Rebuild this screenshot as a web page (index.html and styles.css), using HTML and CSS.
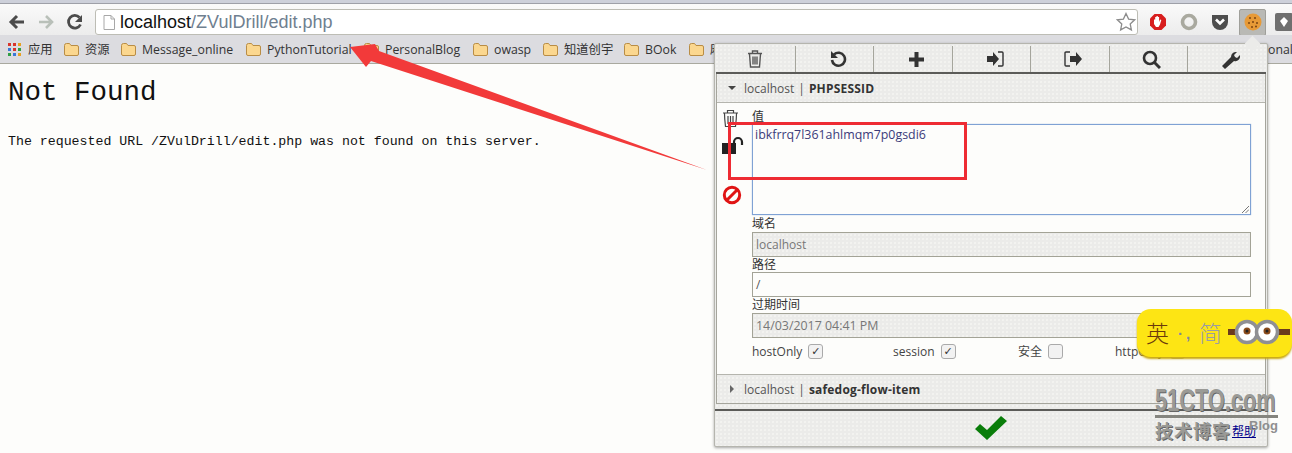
FILE: index.html
```html
<!DOCTYPE html>
<html lang="zh">
<head>
<meta charset="utf-8">
<title>Not Found</title>
<link rel="stylesheet" href="styles.css">
</head>
<body>
<header class="chrome">
  <div class="tabstrip"></div>
  <div class="toolbar">
    <svg class="nav" width="20" height="20" viewBox="0 0 20 20"><path d="M17 10H5M10 4l-6 6 6 6" fill="none" stroke="#4b4b4b" stroke-width="3"/></svg>
    <svg class="nav" width="20" height="20" viewBox="0 0 20 20"><path d="M3 10h12M10 4l6 6-6 6" fill="none" stroke="#b9c0b9" stroke-width="2.6"/></svg>
    <svg class="nav" width="20" height="20" viewBox="0 0 20 20"><path d="M15.500 12.500A6.300 6.300 0 1 1 14.500 5.500" fill="none" stroke="#4b4b4b" stroke-width="2.8"/><path d="M17 3v7h-7z" fill="#4b4b4b"/></svg>
    <div class="omnibox">
      <svg class="page-icon" width="12" height="15" viewBox="0 0 12 15"><path d="M1 .5h7l3.500 3.500v10.500H1z M8 .5V4h3.500" fill="#fff" stroke="#a8a8a8"/></svg>
      <span class="url"><span class="host">localhost</span>/ZVulDrill/edit.php</span>
      <svg class="star" width="20" height="20" viewBox="0 0 20 20"><path d="M10 1.500l2.600 5.600 6 .7-4.400 4.100 1.200 6L10 15l-5.400 2.900 1.200-6L1.400 7.800l6-.7z" fill="#fff" stroke="#8c8c8c" stroke-width="1.300"/></svg>
    </div>
    <div class="extensions">
      <svg width="18" height="18" viewBox="0 0 18 18"><path d="M5.500 1h7L17 5.500v7L12.500 17h-7L1 12.500v-7z" fill="#d81e1e"/><path d="M5 11V6.500h1.200V9 4h1.300v5-6h1.300v6-5h1.300v5l1-2.500 1.200.5-1.300 4.500-1.500 2.500H7z" fill="#fff"/></svg>
      <svg width="18" height="18" viewBox="0 0 18 18"><circle cx="9" cy="9" r="6.500" fill="none" stroke="#a9a99f" stroke-width="3.600"/></svg>
      <svg width="18" height="18" viewBox="0 0 18 18"><path d="M1 2h16v7a8 8 0 0 1-16 0z" fill="#4e4e4e"/><path d="M5 6.500l4 4 4-4" fill="none" stroke="#fff" stroke-width="2.600"/></svg>
      <div class="cookie-btn">
        <svg width="18" height="18" viewBox="0 0 18 18"><circle cx="9" cy="9" r="8.500" fill="#e79a37"/><g fill="#7a4312"><circle cx="6" cy="5" r="1"/><circle cx="11" cy="5" r="1"/><circle cx="5" cy="10" r="1"/><circle cx="9" cy="9" r="1"/><circle cx="13" cy="10" r="1"/><circle cx="8" cy="14" r="1"/><circle cx="12" cy="13.500" r="1"/></g></svg>
      </div>
      <svg width="18" height="18" viewBox="0 0 18 18"><rect x="0" y="0" width="18" height="18" rx="2" fill="#6f6f6f"/><path d="M9 4l4 4-4 6-4-6z" fill="#fff"/></svg>
    </div>
  </div>
  <nav class="bookmarks">
    <span class="bm apps-item">
      <svg width="13" height="13" viewBox="0 0 13 13"><g><rect width="3" height="3" fill="#d9352b"/><rect x="5" width="3" height="3" fill="#d9352b"/><rect x="10" width="3" height="3" fill="#e8a020"/><rect y="5" width="3" height="3" fill="#3b77d8"/><rect x="5" y="5" width="3" height="3" fill="#d9352b"/><rect x="10" y="5" width="3" height="3" fill="#2f9e44"/><rect y="10" width="3" height="3" fill="#2f9e44"/><rect x="5" y="10" width="3" height="3" fill="#3b77d8"/><rect x="10" y="10" width="3" height="3" fill="#e8a020"/></g></svg>
      应用
    </span>
    <span class="bm b1"><svg class="folder" viewBox="0 0 15 13"><path d="M.5 2.500q0-2 2-2h3l1.500 2h6q1.500 0 1.500 1.500v7q0 1.500-1.500 1.500h-11q-1.500 0-1.500-1.500z" fill="#fbd78f" stroke="#b98d45"/></svg>资源</span>
    <span class="bm b2"><svg class="folder" viewBox="0 0 15 13"><path d="M.5 2.500q0-2 2-2h3l1.500 2h6q1.500 0 1.500 1.500v7q0 1.500-1.500 1.500h-11q-1.500 0-1.500-1.500z" fill="#fbd78f" stroke="#b98d45"/></svg>Message_online</span>
    <span class="bm b3"><svg class="folder" viewBox="0 0 15 13"><path d="M.5 2.500q0-2 2-2h3l1.500 2h6q1.500 0 1.500 1.500v7q0 1.500-1.500 1.500h-11q-1.500 0-1.500-1.500z" fill="#fbd78f" stroke="#b98d45"/></svg>PythonTutorial</span>
    <span class="bm b4"><svg class="folder" viewBox="0 0 15 13"><path d="M.5 2.500q0-2 2-2h3l1.500 2h6q1.500 0 1.500 1.500v7q0 1.500-1.500 1.500h-11q-1.500 0-1.500-1.500z" fill="#fbd78f" stroke="#b98d45"/></svg>PersonalBlog</span>
    <span class="bm b5"><svg class="folder" viewBox="0 0 15 13"><path d="M.5 2.500q0-2 2-2h3l1.500 2h6q1.500 0 1.500 1.500v7q0 1.500-1.500 1.500h-11q-1.500 0-1.500-1.500z" fill="#fbd78f" stroke="#b98d45"/></svg>owasp</span>
    <span class="bm b6"><svg class="folder" viewBox="0 0 15 13"><path d="M.5 2.500q0-2 2-2h3l1.500 2h6q1.500 0 1.500 1.500v7q0 1.500-1.500 1.500h-11q-1.500 0-1.500-1.500z" fill="#fbd78f" stroke="#b98d45"/></svg>知道创宇</span>
    <span class="bm b7"><svg class="folder" viewBox="0 0 15 13"><path d="M.5 2.500q0-2 2-2h3l1.500 2h6q1.500 0 1.500 1.500v7q0 1.500-1.500 1.500h-11q-1.500 0-1.500-1.500z" fill="#fbd78f" stroke="#b98d45"/></svg>BOok</span>
    <span class="bm b8"><svg class="folder" viewBox="0 0 15 13"><path d="M.5 2.500q0-2 2-2h3l1.500 2h6q1.500 0 1.500 1.500v7q0 1.500-1.500 1.500h-11q-1.500 0-1.500-1.500z" fill="#fbd78f" stroke="#b98d45"/></svg>麻</span>
    <span class="bm-tail">onal</span>
  </nav>
</header>

<main class="page">
  <h1>Not Found</h1>
  <p>The requested URL /ZVulDrill/edit.php was not found on this server.</p>
</main>

<svg class="annotation" width="1292" height="453" viewBox="0 0 1292 453">
  <path d="M350 47L375 44 379 51 707 170 371 61 366 67z" fill="#f23a3a"/>
</svg>

<section class="popup">
  <div class="actions">
    <span class="act"><svg width="16" height="18" viewBox="0 0 16 18"><path d="M1 3.500h14M5.500 3V1h5v2M2.500 4l1 13h9l1-13M6 6.500v8M8 6.500v8M10 6.500v8" fill="none" stroke="#555" stroke-width="1.400"/></svg></span>
    <span class="act"><svg width="18" height="18" viewBox="0 0 18 18"><path d="M5 4.500A6.500 6.500 0 1 1 3 10" fill="none" stroke="#333" stroke-width="2.600"/><path d="M2 1v7h7z" fill="#333"/></svg></span>
    <span class="act"><svg width="17" height="17" viewBox="0 0 17 17"><path d="M6.500 1h4v5.500H16v4h-5.500V16h-4v-5.500H1v-4h5.500z" fill="#333"/></svg></span>
    <span class="act"><svg width="18" height="16" viewBox="0 0 18 16"><path d="M1 5h6V1l6 7-6 7v-4H1z" fill="#333"/><path d="M12 1h4q1 0 1 1v12q0 1-1 1h-4" fill="none" stroke="#333" stroke-width="1.400"/></svg></span>
    <span class="act"><svg width="18" height="16" viewBox="0 0 18 16"><path d="M6 5h6V1l6 7-6 7v-4H6z" fill="#333"/><path d="M6 1H2Q1 1 1 2v12q0 1 1 1h4" fill="none" stroke="#333" stroke-width="1.400"/></svg></span>
    <span class="act"><svg width="19" height="19" viewBox="0 0 19 19"><circle cx="8" cy="8" r="6" fill="none" stroke="#333" stroke-width="2.600"/><path d="M12.500 12.500L18 18" stroke="#333" stroke-width="3"/></svg></span>
    <span class="act"><svg width="19" height="19" viewBox="0 0 19 19"><path d="M1 16l9-9a5 5 0 0 1 6-5l-3 3 1 2 2 1 3-3a5 5 0 0 1-6 6l-9 8z" fill="#333"/></svg></span>
  </div>
  <div class="panel">
    <div class="acc-head"><i class="tri-down"></i><span class="acc-host">localhost</span><span class="acc-sep">|</span><b>PHPSESSID</b></div>
    <div class="acc-body">
      <div class="side-icons">
        <svg class="si-trash" width="17" height="19" viewBox="0 0 17 19"><path d="M1 4h15M5.500 4V1.500h6V4M2.500 4.500c0 4 .5 9 1 13h10c.5-4 1-9 1-13M6 7v8M8.500 7v8M11 7v8" fill="none" stroke="#444" stroke-width="1.200"/></svg>
        <svg class="si-lock" width="22" height="20" viewBox="0 0 22 20"><rect x="0" y="7" width="14" height="11" fill="#222"/><path d="M12 8V6a4 4 0 0 1 8 0v3" fill="none" stroke="#222" stroke-width="2.200"/></svg>
        <svg class="si-ban" width="20" height="20" viewBox="0 0 20 20"><circle cx="10" cy="10" r="7.700" fill="none" stroke="#e01414" stroke-width="3"/><path d="M4.500 15.500l11-11" stroke="#e01414" stroke-width="3"/></svg>
      </div>
      <div class="fields">
        <label class="lbl lbl-value">值</label>
        <div class="box value-box">ibkfrrq7l361ahlmqm7p0gsdi6
          <svg class="grip" width="7" height="7" viewBox="0 0 7 7"><path d="M0 7L7 0M3.500 7L7 3.500" stroke="#777" stroke-width="1"/></svg>
        </div>
        <label class="lbl">域名</label>
        <div class="box input off gap">localhost</div>
        <label class="lbl">路径</label>
        <div class="box input">/</div>
        <label class="lbl">过期时间</label>
        <div class="box input off gap date">14/03/2017 04:41 PM</div>
        <div class="checks">
          <span class="chk c1">hostOnly<i class="cb on">✓</i></span>
          <span class="chk c2">session<i class="cb on">✓</i></span>
          <span class="chk c3">安全<i class="cb"></i></span>
          <span class="chk c4">httpOnly<i class="cb"></i></span>
        </div>
      </div>
    </div>
    <div class="acc-head second"><i class="tri-right"></i><span class="acc-host">localhost</span><span class="acc-sep">|</span><b>safedog-flow-item</b></div>
  </div>
  <div class="footer">
    <svg class="ok" width="34" height="26" viewBox="0 0 34 26"><path d="M1 14l5-5 7 6L27 1l6 5-20 19z" fill="#0a7d0a"/></svg>
    <a class="help">帮助</a>
  </div>
</section>

<div class="redbox"></div>

<div class="ime">
  <span class="ime-en">英</span><span class="ime-dot">·,</span><span class="ime-cn">简</span>
  <svg class="eyes" width="62" height="34" viewBox="0 0 62 34"><rect x="0" y="13" width="62" height="6" fill="#6b3a1c"/><g fill="#fff" stroke="#8f8f93" stroke-width="3.500"><circle cx="19" cy="16" r="10.500"/><circle cx="39" cy="16" r="10.500"/></g><circle cx="19" cy="15" r="3.500" fill="#8a4a1a"/><circle cx="39" cy="15" r="3.500" fill="#8a4a1a"/><circle cx="19" cy="15" r="1.500" fill="#222"/><circle cx="39" cy="15" r="1.500" fill="#222"/></svg>
</div>

<div class="watermark">
  <div class="wm-top"><span class="wm-logo">51CTO.com</span></div>
  <div class="wm-bottom"><span class="wm-cn">技术博客</span><span class="wm-blog">Blog</span></div>
</div>
</body>
</html>
```
FILE: styles.css
```css
* { box-sizing: border-box; }
html, body { margin: 0; height: 453px; overflow: hidden; }
body { background: #fdfdfb; font-family: "Open Sans", "Noto Sans CJK SC", sans-serif; position: relative; width: 1292px; }

.chrome { height: 64px; border-bottom: 1px solid #a9a99f; background: #e9e9ea; }
.tabstrip { height: 4px; background: #cdd0da; border-bottom: 1px solid #9ea0a8; }
.toolbar { height: 31px; display: flex; align-items: center; background: linear-gradient(#fafafa, #ececec); padding: 5px 0 0 7px; }
.nav { margin-right: 9px; flex: none; }
.omnibox { width: 1043px; height: 26px; margin-left: 1px; background: #fff; border: 1px solid #bdbdb5; border-radius: 3px; display: flex; align-items: center; padding-left: 7px; flex: none; }
.page-icon { flex: none; margin-right: 5px; }
.url { font: 18px "Liberation Sans", sans-serif; color: #6f8090; flex: 1; }
.host { color: #111; }
.star { flex: none; margin-right: 1px; }
.extensions { display: flex; align-items: center; gap: 13px; margin-left: 11px; }
.cookie-btn { width: 27px; height: 27px; margin: 0 -4px 0 -3px; background: #b9b9b5; border: 1px solid #9f9f9a; border-radius: 2px; display: flex; align-items: center; justify-content: center; }

.bookmarks { height: 28px; background: #dcdce0; position: relative; font-size: 12.300px; color: #333; }
.bm { position: absolute; top: 7px; display: flex; align-items: center; gap: 6px; white-space: nowrap; line-height: 15px; }
.folder { width: 15px; height: 13px; flex: none; }
.apps-item { left: 8px; gap: 7px; }
.b1 { left: 64px; } .b2 { left: 121px; } .b3 { left: 246px; } .b4 { left: 364px; }
.b5 { left: 473px; } .b6 { left: 543px; } .b7 { left: 624px; } .b8 { left: 689px; }
.bm-tail { position: absolute; left: 1268px; top: 7px; line-height: 15px; }

.page { padding: 0 8px; font-family: "Liberation Mono", monospace; color: #111; }
h1 { margin: 0; padding-top: 13px; font-size: 27.500px; font-weight: 400; line-height: 32px; }
.page p { margin: 25px 0 0; font-size: 13.250px; line-height: 16px; }

.annotation { position: absolute; left: 0; top: 0; pointer-events: none; }

.popup { position: absolute; left: 714px; top: 43px; width: 554px; height: 404px; background-color: #ebebe9; background-image: radial-gradient(#f3f3f1 .7px, transparent .8px); background-size: 4px 4px; border: 1px solid #b5b5ae; border-radius: 2px; box-shadow: 0 1px 3px rgba(0,0,0,.35); display: flex; flex-direction: column; padding: 2px 1px 0; }
.popup::before { content: ""; position: absolute; left: 532px; top: -6px; width: 11px; height: 11px; background: #ebebe9; transform: rotate(45deg); }
.actions { height: 28px; display: flex; border-bottom: 2px solid #5b5b58; flex: none; position: relative; }
.act { width: 78.500px; flex: none; display: flex; align-items: center; justify-content: center; border-left: 1px solid #a5a59c; padding-left: 7px; }
.act:first-child { border-left: 0; padding-left: 0; }
.panel { height: 330px; flex: none; border: 1px solid #a5a59c; border-top: 0; display: flex; flex-direction: column; }
.acc-head { height: 29px; flex: none; display: flex; align-items: center; font-size: 12px; color: #444; padding-left: 11px; border-bottom: 1px solid #b5b5ae; }
.acc-head.second { border-top: 1px solid #b5b5ae; border-bottom: 0; height: 29px; padding-left: 13px; }
.acc-head b { font-weight: 700; color: #333; letter-spacing: .2px; }
.acc-host { margin-left: 8px; color: #555; }
.second .acc-host { margin-left: 10px; }
.acc-sep { margin: 0 4px; color: #555; }
.tri-down { width: 0; height: 0; border: 4px solid transparent; border-top: 4px solid #444; border-bottom: 0; }
.tri-right { width: 0; height: 0; border: 4px solid transparent; border-left: 4px solid #666; border-right: 0; }
.acc-body { flex: 1; background: #fdfdfb; display: flex; padding-top: 6px; padding-left: 5px; }
.side-icons { width: 31px; display: flex; flex-direction: column; flex: none; align-items: flex-start; }
.si-lock { margin-top: 8px; }
.si-ban { margin-top: 29px; }
.fields { width: 499px; margin-left: -1px; display: flex; flex-direction: column; }
.lbl { display: block; font-size: 12px; line-height: 15px; height: 15px; color: #333; }
.box { border: 1px solid #a3a396; font-size: 12px; padding-left: 3px; color: #555; background: #fdfdfb; }
.value-box { position: relative; height: 91px; border: 1px solid #7fa2d4; box-shadow: 0 0 1px #9db8de; color: #3b3b7a; padding: 2px 0 0 2px; margin-bottom: 1px; line-height: 16px; font-size: 12.400px; }
.grip { position: absolute; right: 1px; bottom: 1px; }
.input { height: 25px; line-height: 23px; flex: none; }
.gap { margin-top: 1px; }
.date { font-size: 12.400px; }
.off { background-color: #ebebe9; background-image: radial-gradient(#f3f3f1 .7px, transparent .8px); background-size: 4px 4px; color: #777; }
.checks { position: relative; height: 24px; font-size: 12px; color: #444; }
.chk { position: absolute; top: 5px; display: flex; align-items: center; gap: 6px; white-space: nowrap; line-height: 17px; }
.c1 { left: 0; } .c2 { left: 141px; } .c3 { left: 266px; } .c4 { left: 363px; }
.cb { width: 15px; height: 15px; border: 1px solid #aaa; border-radius: 3px; background: #f2f2f2; font: 11px/14px "DejaVu Sans", sans-serif; text-align: center; color: #333; }
.footer { flex: 1; border-top: 2px solid #5b5b58; margin: 5px -1px 0; position: relative; display: flex; align-items: center; justify-content: center; padding-bottom: 1px; }
.help { position: absolute; left: 517px; top: 11px; font-size: 12px; color: #00008b; text-decoration: underline; }

.redbox { position: absolute; left: 728px; top: 122px; width: 239px; height: 58px; border: 3px solid #ee2b33; }

.ime { position: absolute; left: 1137px; top: 309px; width: 155px; height: 48px; background: #fde514; border-radius: 14px; box-shadow: 0 2px 2px #c9a80f; display: flex; align-items: center; padding-left: 9px; font-size: 23px; font-weight: 300; line-height: 30px; }
.ime-en { color: #6b3a0c; }
.ime-dot { color: #8088a0; margin-left: 9px; margin-right: 7px; font: 700 15px "Liberation Sans", sans-serif; width: 14px; letter-spacing: 3px; }
.ime-cn { color: #9a9ca4; }
.eyes { margin-left: 6px; flex: none; }

.watermark { position: absolute; left: 1155px; top: 385px; width: 123px; height: 56px; color: #9a9a96; font-family: "Liberation Sans", sans-serif; font-weight: 700; }
.wm-top { height: 33px; border-bottom: 3px solid #85857f; overflow: visible; }
.wm-logo { display: block; font-size: 32px; line-height: 30px; white-space: nowrap; transform: scaleX(.68); transform-origin: left top; text-shadow: 1px 1px 0 #666; width: 180px; }
.wm-bottom { display: flex; align-items: flex-start; justify-content: space-between; height: 24px; }
.wm-cn { font-family: "Noto Sans CJK SC", sans-serif; font-size: 18px; line-height: 24px; letter-spacing: 1px; text-shadow: 1px 1px 0 #666; }
.wm-blog { font-size: 13px; line-height: 16px; color: #8f8f8f; }
```
